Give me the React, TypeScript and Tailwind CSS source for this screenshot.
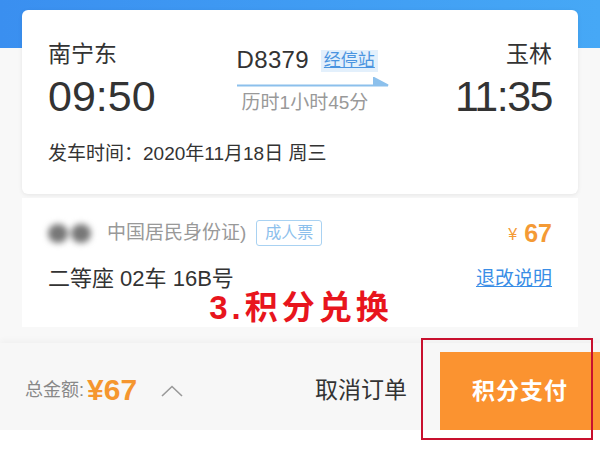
const font = { fontFamily: '"Liberation Sans", "Noto Sans CJK SC", sans-serif' };

const Arrow = () => (
	<svg width="152" height="10" viewBox="0 0 152 10" className="block">
		<path d="M0 8.5 H151 L137 1 V8.5" fill="#8cc0ec" stroke="#8cc0ec" strokeWidth="2" strokeLinejoin="miter" />
	</svg>
);

const ChevronUp = () => (
	<svg width="22" height="12" viewBox="0 0 22 12" className="block">
		<path d="M1 11 L11 1.5 L21 11" fill="none" stroke="#999" strokeWidth="1.6" />
	</svg>
);

const App = () => {
	return (
		<div className="w-[600px] h-[452px] overflow-hidden bg-[#f8f8f8] flex flex-col" style={font}>
			<div className="h-[48px] shrink-0 bg-gradient-to-r from-[#3a8ff0] to-[#46a8f6]" />

			{/* train info card */}
			<div className="-mt-[38px] mx-[22px] h-[184px] shrink-0 bg-white rounded-md shadow-[0_1px_4px_rgba(0,0,0,0.08)] px-[26px] pt-[30px] flex flex-col">
				<div className="flex">
					<div className="flex flex-col">
						<span className="text-[23px] leading-[28px] text-[#333]">南宁东</span>
						<span className="text-[43px] leading-[44px] mt-[6px] text-[#333]">09:50</span>
					</div>
					<div className="flex flex-col items-start ml-[81px] mt-[5px]">
						<div className="flex items-center gap-[12px]">
							<span className="text-[24px] leading-[30px] text-[#333] tracking-[0.3px]">D8379</span>
							<span className="bg-[#e3f0fc] text-[#4a94e0] underline text-[17px] leading-[22px] px-[3px] mt-[2px]">
								经停站
							</span>
						</div>
						<div className="mt-[2px]">
							<Arrow />
						</div>
						<span className="text-[19px] leading-[24px] text-[#999] ml-[5px] mt-[4px]">历时1小时45分</span>
					</div>
					<div className="flex-1" />
					<div className="flex flex-col items-end">
						<span className="text-[23px] leading-[28px] text-[#333]">玉林</span>
						<span className="text-[43px] leading-[44px] mt-[6px] text-[#333] tracking-[-1.5px]">11:35</span>
					</div>
				</div>
				<div className="mt-[24px] text-[19px] leading-[24px] text-[#333]">发车时间：2020年11月18日 周三</div>
			</div>

			{/* passenger card */}
			<div className="mt-[4px] mx-[22px] h-[129px] shrink-0 bg-white px-[26px] pt-[21px] flex flex-col">
				<div className="flex items-center h-[28px]">
					<div className="flex gap-[3px] blur-[3px]">
						<span className="w-[20px] h-[19px] rounded-full bg-[#777]" />
						<span className="w-[20px] h-[19px] rounded-full bg-[#777]" />
					</div>
					<span className="ml-[16px] text-[19px] leading-[24px] text-[#999]">中国居民身份证)</span>
					<span className="ml-[10px] border border-[#a9d2f2] rounded-[3px] text-[#8cc0ec] text-[16px] leading-[24px] px-[8px]">
						成人票
					</span>
					<div className="flex-1" />
					<span className="text-[#f49a35] text-[16px] mr-[7px] mt-[3px]">¥</span>
					<span className="text-[#f49a35] text-[25px] font-bold leading-[28px]">67</span>
				</div>
				<div className="flex items-center justify-between mt-[18px]">
					<span className="text-[22px] leading-[28px] text-[#333]">二等座 02车 16B号</span>
					<span className="text-[19px] leading-[28px] text-[#3a8ee6] underline">退改说明</span>
				</div>
				<div className="flex justify-center -mt-[1px] ml-[2px]">
					<span className="text-[33px] leading-[32px] font-bold text-[#e8151d] tracking-[4px]">3.积分兑换</span>
				</div>
			</div>

			{/* bottom bar */}
			<div className="mt-[16px] h-[87px] shrink-0 bg-[#f7f7f7] shadow-[0_-3px_6px_rgba(0,0,0,0.03)] flex items-center">
				<div className="flex items-center mt-[7px]">
					<span className="ml-[25px] text-[18px] text-[#888]">总金额:</span>
					<span className="text-[30px] leading-[32px] font-bold text-[#f5962f] ml-[3px]">¥67</span>
					<div className="ml-[24px] mt-[2px]">
						<ChevronUp />
					</div>
				</div>
				<div className="flex-1" />
				<span className="text-[23px] text-[#333] mr-[33px] mt-[7px]">取消订单</span>
				<div className="relative self-stretch flex items-stretch">
					<div className="absolute left-[-19px] top-[-5px] w-[172px] h-[102px] border-2 border-[#c8102e]" />
					<div className="mt-[9px] w-[160px] bg-[#fb9330] flex items-center justify-center text-white text-[23px] font-semibold tracking-[1px]">
						积分支付
					</div>
				</div>
			</div>
			<div className="flex-1 bg-white" />
		</div>
	);
};

export default App;
